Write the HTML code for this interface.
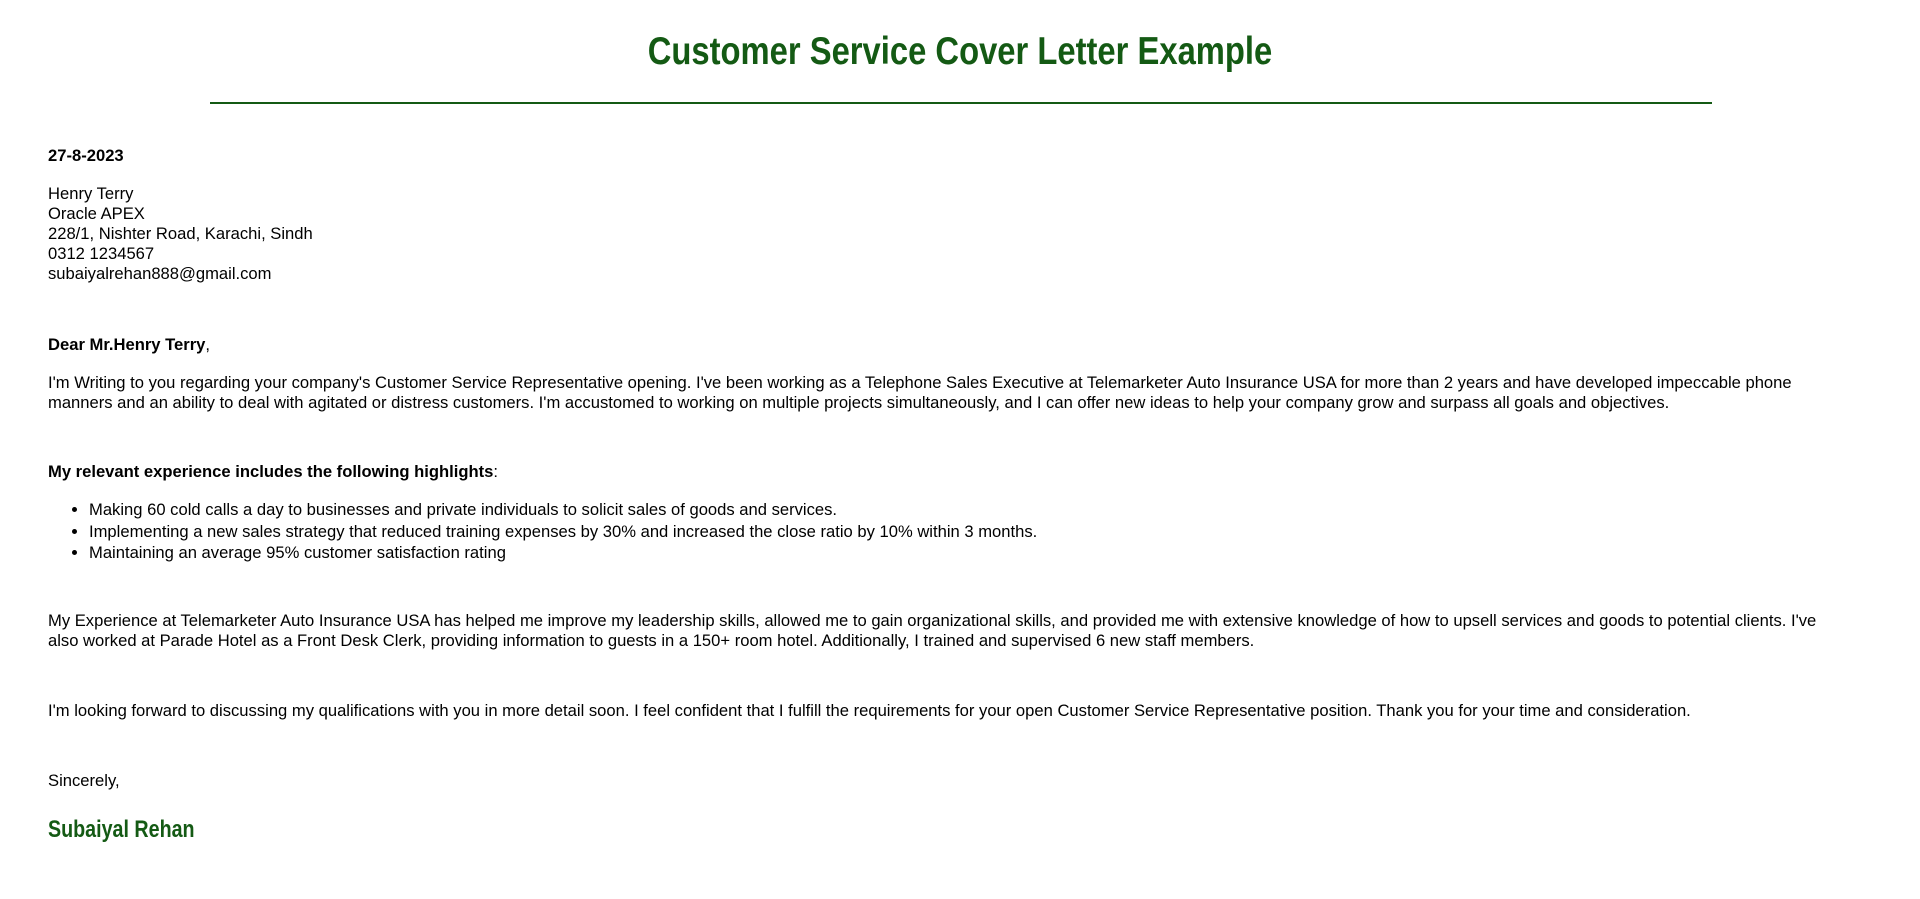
<!DOCTYPE html>
<html><head><meta charset="utf-8"><style>
body{margin:0;width:1920px;height:899px;background:#fff;font-family:"Liberation Sans",sans-serif;color:#000;font-size:16.6px;line-height:20px;position:relative;overflow:hidden}
.a{position:absolute;left:48px;width:1800px;margin:0}
h1{position:absolute;top:26px;left:0;width:1920px;text-align:center;margin:0;font-family:"Liberation Sans",sans-serif;font-weight:bold;font-size:39px;line-height:52px;color:#145a14;transform:scaleX(0.84);transform-origin:center}
.hr{position:absolute;left:210px;width:1502px;top:102px;height:2px;background:#145a14}
b{font-weight:bold}
ul{margin:0;padding-left:41px}
.sig{font-weight:bold;font-size:24px;line-height:30px;color:#145a14;transform:scaleX(0.82);transform-origin:left}
</style></head><body>
<h1>Customer Service Cover Letter Example</h1>
<div class="hr"></div>
<p class="a" style="top:146px"><b>27-8-2023</b></p>
<p class="a" style="top:184px">Henry Terry<br>Oracle APEX<br>228/1, Nishter Road, Karachi, Sindh<br>0312 1234567<br>subaiyalrehan888@gmail.com</p>
<p class="a" style="top:335px"><b>Dear Mr.Henry Terry</b>,</p>
<p class="a" style="top:373px">I'm Writing to you regarding your company's Customer Service Representative opening. I've been working as a Telephone Sales Executive at Telemarketer Auto Insurance USA for more than 2 years and have developed impeccable phone manners and an ability to deal with agitated or distress customers. I'm accustomed to working on multiple projects simultaneously, and I can offer new ideas to help your company grow and surpass all goals and objectives.</p>
<p class="a" style="top:462px"><b>My relevant experience includes the following highlights</b>:</p>
<ul class="a" style="top:499px;line-height:21.5px">
<li>Making 60 cold calls a day to businesses and private individuals to solicit sales of goods and services.</li>
<li>Implementing a new sales strategy that reduced training expenses by 30% and increased the close ratio by 10% within 3 months.</li>
<li>Maintaining an average 95% customer satisfaction rating</li>
</ul>
<p class="a" style="top:611px">My Experience at Telemarketer Auto Insurance USA has helped me improve my leadership skills, allowed me to gain organizational skills, and provided me with extensive knowledge of how to upsell services and goods to potential clients. I've also worked at Parade Hotel as a Front Desk Clerk, providing information to guests in a 150+ room hotel. Additionally, I trained and supervised 6 new staff members.</p>
<p class="a" style="top:701px">I'm looking forward to discussing my qualifications with you in more detail soon. I feel confident that I fulfill the requirements for your open Customer Service Representative position. Thank you for your time and consideration.</p>
<p class="a" style="top:771px">Sincerely,</p>
<p class="a sig" style="top:815px">Subaiyal Rehan</p>
</body></html>
